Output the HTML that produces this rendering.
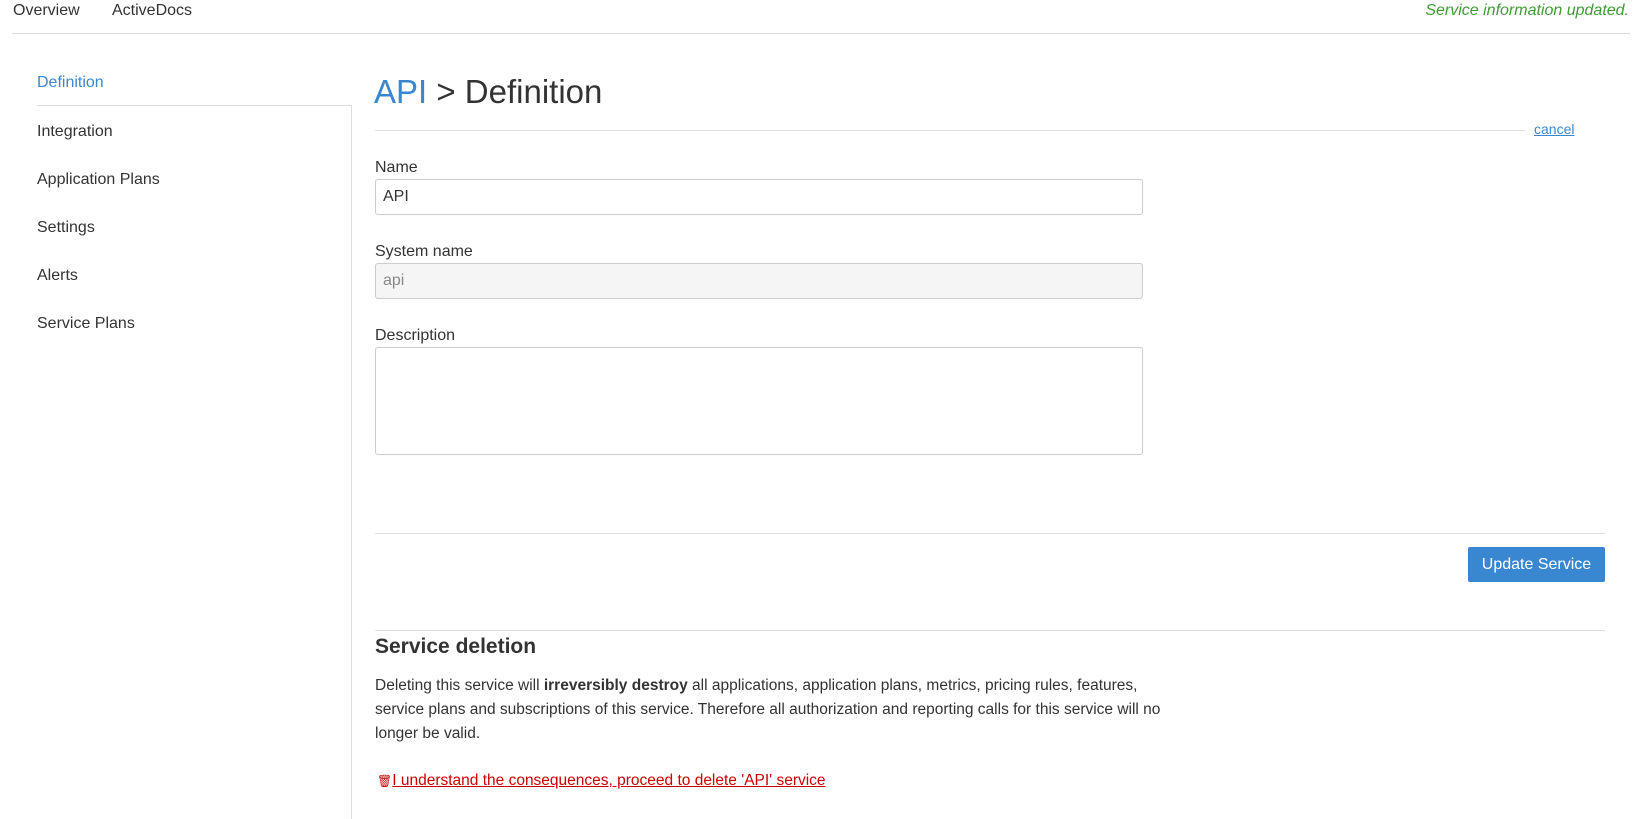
<!DOCTYPE html>
<html><head><meta charset="utf-8"><style>
*{box-sizing:border-box;margin:0;padding:0}
body{width:1634px;height:819px;overflow:hidden;background:#fff;font-family:"Liberation Sans",sans-serif;color:#333;font-size:16px;position:relative}
.a{position:absolute;white-space:nowrap}
.hr{position:absolute;height:1px;background:#ddd}
.inp{position:absolute;left:375px;width:768px;border:1px solid #ccc;border-radius:3px;padding-left:7px;font-size:16px;display:flex;align-items:center}
</style></head><body>
<div class="a" style="left:13px;top:2px;font-size:16px">Overview</div>
<div class="a" style="left:112px;top:2px;font-size:16px">ActiveDocs</div>
<div class="a" style="right:5px;top:2px;font-size:16px;font-style:italic;color:#3f9c35">Service information updated.</div>
<div class="hr" style="left:12px;top:33px;width:1618px"></div>

<div class="a" style="left:37px;top:74px;color:#3a87d1">Definition</div>
<div class="hr" style="left:37px;top:105px;width:314px"></div>
<div style="position:absolute;left:351px;top:105px;width:1px;height:714px;background:#ddd"></div>
<div class="a" style="left:37px;top:123px">Integration</div>
<div class="a" style="left:37px;top:171px">Application Plans</div>
<div class="a" style="left:37px;top:219px">Settings</div>
<div class="a" style="left:37px;top:267px">Alerts</div>
<div class="a" style="left:37px;top:315px">Service Plans</div>

<div class="a" style="left:374px;top:73px;font-size:33px"><span style="color:#3a87d1">API</span> &gt; Definition</div>
<div class="hr" style="left:375px;top:130px;width:1150px"></div>
<div class="a" style="left:1534px;top:121px;font-size:14px;color:#3a87d1;text-decoration:underline">cancel</div>

<div class="a" style="left:375px;top:159px">Name</div>
<div class="inp" style="top:179px;height:36px">API</div>
<div class="a" style="left:375px;top:243px">System name</div>
<div class="inp" style="top:263px;height:36px;background:#f5f5f5;color:#888">api</div>
<div class="a" style="left:375px;top:327px">Description</div>
<div class="inp" style="top:347px;height:108px"></div>

<div class="hr" style="left:375px;top:533px;width:1230px"></div>
<div class="a" style="left:1468px;top:547px;width:137px;height:35px;background:#3a87d1;color:#fff;border-radius:2px;font-size:16px;display:flex;align-items:center;justify-content:center">Update Service</div>
<div class="hr" style="left:375px;top:630px;width:1230px"></div>

<div class="a" style="left:375px;top:635px;font-size:21px;font-weight:bold">Service deletion</div>
<div style="position:absolute;left:375px;top:674px;width:800px;line-height:24px;font-size:15.5px">Deleting this service will <b>irreversibly destroy</b> all applications, application plans, metrics, pricing rules, features, service plans and subscriptions of this service. Therefore all authorization and reporting calls for this service will no longer be valid.</div>
<div class="a" style="left:377px;top:772px;font-size:15.5px;color:#c00"><span style="font-size:12px">🗑</span><span style="text-decoration:underline">I understand the consequences, proceed to delete 'API' service</span></div>
</body></html>
